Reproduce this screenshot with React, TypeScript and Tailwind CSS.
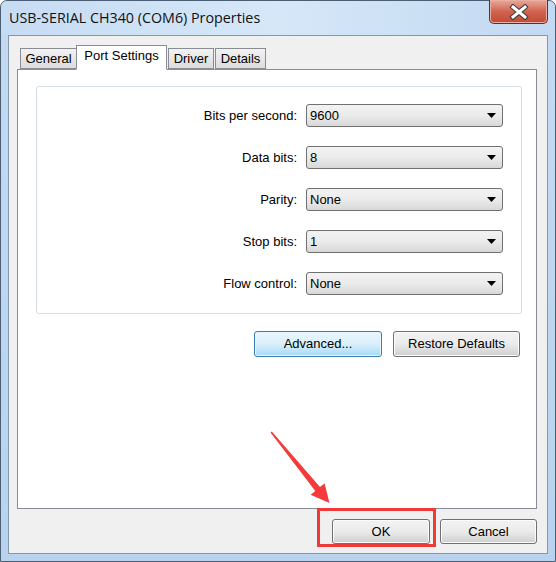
import React from 'react';

const fields = [
  { label: 'Bits per second:', value: '9600' },
  { label: 'Data bits:', value: '8' },
  { label: 'Parity:', value: 'None' },
  { label: 'Stop bits:', value: '1' },
  { label: 'Flow control:', value: 'None' },
];

const tabs = [
  { name: 'General', cls: 'w-[57px]' },
  { name: 'Port Settings', cls: 'w-[91px] -ml-px' },
  { name: 'Driver', cls: 'w-[46px] ml-px' },
  { name: 'Details', cls: 'w-[51px] ml-px' },
];

const Select: React.FC<{ value: string }> = ({ value }) => (
  <div className="w-[197px] h-[23px] flex items-center justify-between pl-[3px] pr-[6px] rounded-[3px] border border-[#707070] bg-gradient-to-b from-[#f3f3f3] via-[#ebebeb] to-[#d8d8d8]">
    <span>{value}</span>
    <svg width="9" height="5" viewBox="0 0 9 5">
      <polygon points="0,0 9,0 4.5,5" fill="#000" />
    </svg>
  </div>
);

const Button: React.FC<{ label: string; size: string; primary?: boolean }> = ({ label, size, primary }) => (
  <div
    className={`${size} flex items-center justify-center rounded-[3px] border ${
      primary
        ? 'border-[#3c7fb1] bg-gradient-to-b from-[#eaf6fd] via-[#d9f0fc] to-[#a7d9f5] shadow-[inset_0_0_0_1px_#e6f4fc]'
        : 'border-[#707070] bg-gradient-to-b from-[#f2f2f2] via-[#ebebeb] to-[#cfcfcf] shadow-[inset_0_0_0_1px_#fcfcfc]'
    }`}
  >
    {label}
  </div>
);

const App: React.FC = () => {
  return (
    <div
      className="relative w-[556px] h-[562px] flex flex-col rounded-t-[7px] border border-[#4a5f74] bg-gradient-to-b from-[#c3daf2] to-[#b9d3ee] text-[13px] text-black"
      style={{ fontFamily: '"Liberation Sans", Arial, sans-serif' }}
    >
      {/* Title bar */}
      <div className="h-[34px] flex items-start justify-between pl-[8px] pr-[7px] bg-gradient-to-r from-[#c6dcf3] via-[#d6e7f8] to-[#c2d9f1] rounded-t-[7px]">
        <div className="pt-[6px] text-[14.3px] text-[#111]" style={{ fontFamily: '"Open Sans", "Liberation Sans", sans-serif' }}>
          USB-SERIAL CH340 (COM6) Properties
        </div>
        <div className="w-[59px] h-[24px] -mt-px flex items-center justify-center rounded-b-[5px] border border-t-0 border-[#6b2a20] bg-gradient-to-b from-[#e9a99b] via-[#d0634f] to-[#c24a33] shadow-[inset_0_0_0_1px_#e8b0a5]">
          <svg width="20" height="16" viewBox="0 0 20 16">
            <path d="M4 3 L16 13 M16 3 L4 13" stroke="#3b3b3b" strokeWidth="5" strokeLinecap="square" />
            <path d="M4 3 L16 13 M16 3 L4 13" stroke="#fff" strokeWidth="3" strokeLinecap="square" />
          </svg>
        </div>
      </div>

      {/* Client area */}
      <div className="flex-1 mx-[7px] mb-[7px] border border-[#8497ab] bg-[#f0f0f0] flex flex-col pl-[8px] pr-[10px]">
        {/* Tab strip */}
        <div className="flex items-end mt-[9px] pl-[3px] h-[24px] relative z-10">
          {tabs.map((t) => {
            const active = t.name === 'Port Settings';
            return (
              <div
                key={t.name}
                className={`${t.cls} flex items-center justify-center border border-[#898c95] ${
                  active
                    ? 'h-[25px] -mb-px pb-[3px] bg-white border-b-white'
                    : 'h-[21px] bg-gradient-to-b from-[#f2f2f2] to-[#dcdcdc]'
                }`}
              >
                {t.name}
              </div>
            );
          })}
        </div>

        {/* Tab panel */}
        <div className="h-[440px] bg-white border border-[#898c95] flex flex-col pt-[16px] pl-[18px] pr-[14px]">
          <div className="h-[228px] border border-[#d5dfe5] rounded-[3px] flex flex-col gap-[19px] pt-[17px] pr-[18px]">
            {fields.map((f) => (
              <div key={f.label} className="flex items-center justify-end gap-[9px]">
                <span>{f.label}</span>
                <Select value={f.value} />
              </div>
            ))}
          </div>
          <div className="flex justify-end gap-[11px] mt-[17px] pr-[2px]">
            <Button label="Advanced..." size="w-[128px] h-[26px]" primary />
            <Button label="Restore Defaults" size="w-[127px] h-[26px]" />
          </div>
        </div>

        {/* Dialog buttons */}
        <div className="flex justify-end gap-[10px] mt-[10px]">
          <Button label="OK" size="w-[98px] h-[25px]" />
          <Button label="Cancel" size="w-[97px] h-[25px]" />
        </div>
      </div>

      {/* Annotation overlay */}
      <div className="absolute left-[316px] top-[507px] w-[119px] h-[39px] border-[3px] border-[#f03a3a]" />
      <svg className="absolute left-0 top-0 pointer-events-none" width="556" height="562">
        <polygon
          points="269.5,431.5 270.8,430.6 319,486 323.6,482.4 328.5,502 309.6,493.8 314.3,490"
          fill="#f43a3a"
        />
      </svg>
    </div>
  );
};

export default App;
